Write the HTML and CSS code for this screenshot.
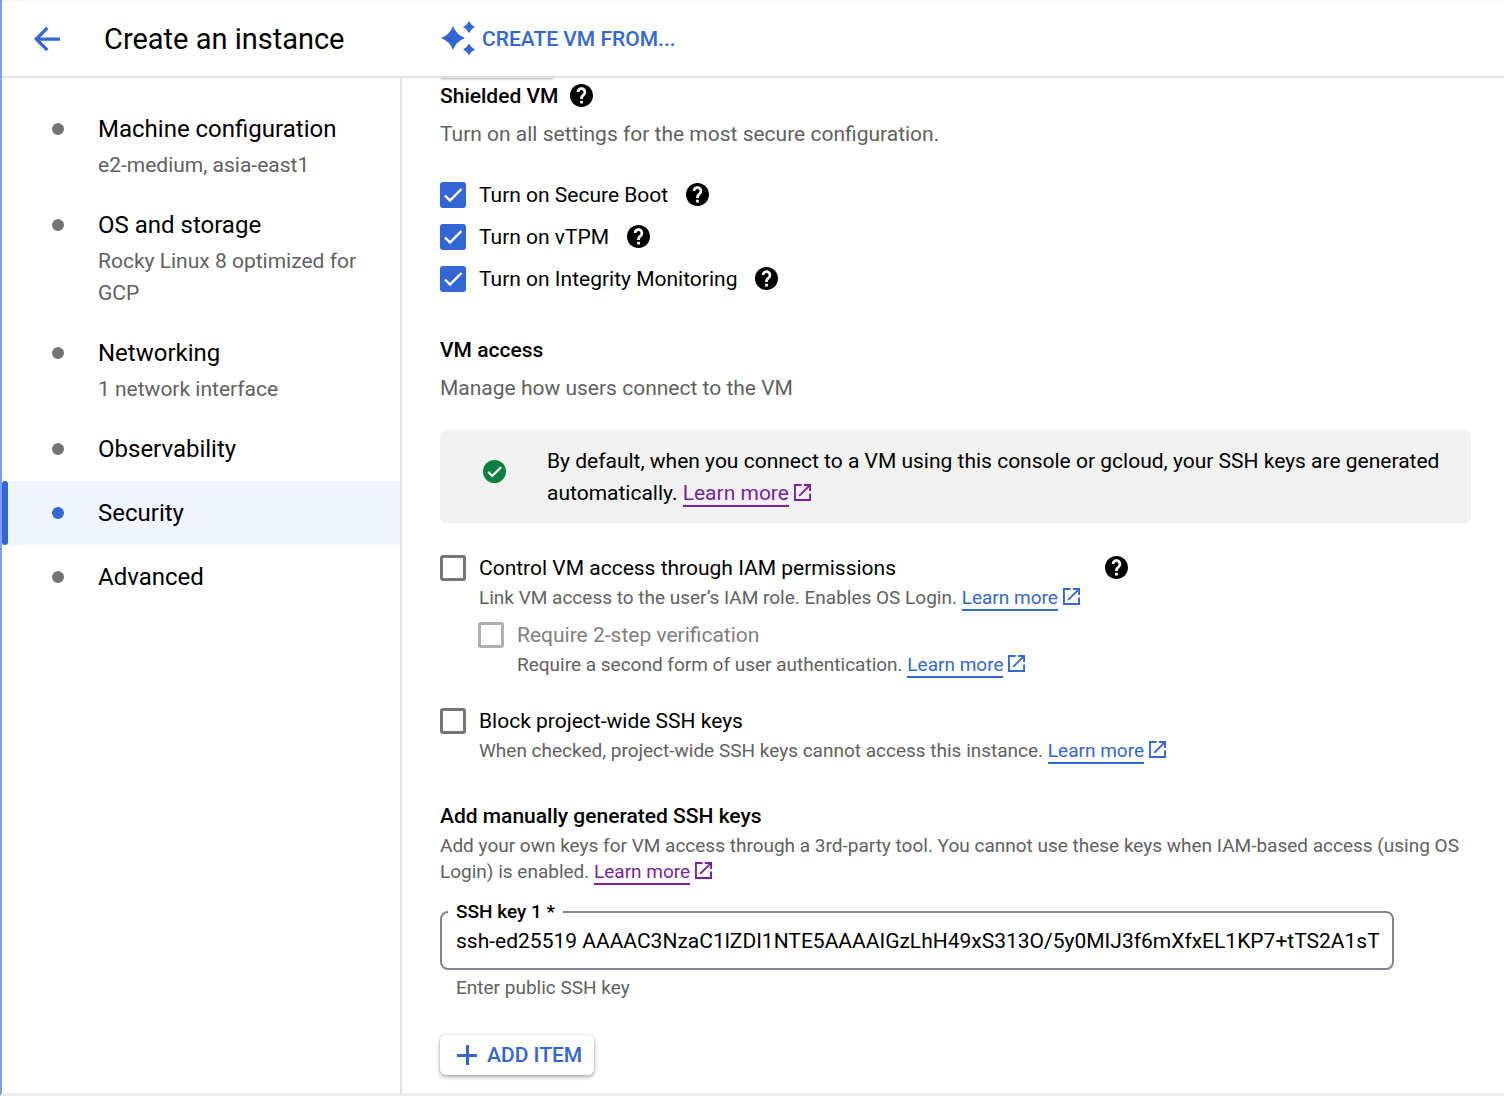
FILE: index.html
```html
<!DOCTYPE html>
<html lang="en">
<head>
<meta charset="utf-8">
<title>Create an instance</title>
<link rel="stylesheet" href="styles.css">
</head>
<body>
<svg class="sprite" aria-hidden="true">
  <symbol id="help" viewBox="2 2 20 20"><path d="M12 2C6.48 2 2 6.48 2 12s4.48 10 10 10 10-4.48 10-10S17.52 2 12 2zm1.2 17h-2.4v-2.4h2.4V19zm2.3-7.8-.9.92C13.7 13 13.2 13.6 13.2 15h-2.4v-.5c0-1.1.45-2.1 1.17-2.83l1.24-1.26c.37-.36.59-.86.59-1.41 0-1-.8-1.8-1.8-1.8s-1.8.8-1.8 1.8H7.9c0-2.3 1.8-4.1 4.1-4.1s4.1 1.8 4.1 4.1c0 .86-.3 1.64-.6 2.2z"/></symbol>
  <symbol id="open" viewBox="3 3 18 18"><path d="M19 19H5V5h6V3H3v18h18v-8h-2v6zM13.500 3v2h4.100l-9.800 9.800 1.400 1.400L19 6.400v4.100h2V3h-7.500z"/></symbol>
</svg>

<header class="topbar">
  <div class="topbar-title">
    <button class="icon-button" type="button" aria-label="Back">
      <svg class="back-icon" viewBox="4 4 16 16"><path d="M20 11H7.830l5.090-5.090L11.500 4.500 4 12l7.500 7.500 1.420-1.410L7.830 13H20v-2z"/></svg>
    </button>
    <h1>Create an instance</h1>
  </div>
  <div class="topbar-actions">
    <button class="text-button" type="button">
      <svg class="spark-icon" viewBox="0 0 36 36"><path d="M13 5q3.500 9 12 12-8.500 3-12 12-3.500-9-12-12 8.500-3 12-12zM29 0q1.800 4.200 6 6-4.200 1.800-6 6-1.800-4.200-6-6 4.200-1.800 6-6zM29 22.500q1.800 4.200 6 6-4.200 1.800-6 6-1.800-4.200-6-6 4.200-1.800 6-6z"/></svg>
      <span>CREATE VM FROM...</span>
    </button>
  </div>
</header>

<div class="layout">
  <nav class="sidebar" aria-label="Instance settings">
    <a class="step" href="#machine"><span class="step-title">Machine configuration</span><span class="step-note">e2-medium, asia-east1</span></a>
    <a class="step" href="#os"><span class="step-title">OS and storage</span><span class="step-note">Rocky Linux 8 optimized for GCP</span></a>
    <a class="step" href="#networking"><span class="step-title">Networking</span><span class="step-note">1 network interface</span></a>
    <a class="step" href="#observability"><span class="step-title">Observability</span></a>
    <a class="step active" href="#security" aria-current="step"><span class="step-title">Security</span></a>
    <a class="step" href="#advanced"><span class="step-title">Advanced</span></a>
  </nav>

  <main class="content">
    <div class="scrolled-edge"></div>

    <section>
      <div class="heading-row">
        <h2>Shielded VM</h2>
        <svg class="help-icon"><use href="#help"/></svg>
      </div>
      <p class="lead">Turn on all settings for the most secure configuration.</p>
      <div class="check-list">
        <div class="check-row"><input type="checkbox" id="secure-boot" checked><label for="secure-boot">Turn on Secure Boot</label><svg class="help-icon"><use href="#help"/></svg></div>
        <div class="check-row"><input type="checkbox" id="vtpm" checked><label for="vtpm">Turn on vTPM</label><svg class="help-icon"><use href="#help"/></svg></div>
        <div class="check-row"><input type="checkbox" id="integrity" checked><label for="integrity">Turn on Integrity Monitoring</label><svg class="help-icon"><use href="#help"/></svg></div>
      </div>
    </section>

    <section class="access">
      <h2>VM access</h2>
      <p class="lead">Manage how users connect to the VM</p>

      <div class="banner">
        <svg class="ok-icon" viewBox="2 2 20 20"><circle cx="12" cy="12" r="10" fill="#0b8043"/><path d="M6.500 12.300l3.600 3.600 7.600-7.600" fill="none" stroke="#fff" stroke-width="2"/></svg>
        <p>By default, when you connect to a VM using this console or gcloud, your SSH keys are generated automatically. <a class="link visited" href="#ssh-docs">Learn more</a><svg class="open-icon visited"><use href="#open"/></svg></p>
      </div>

      <div class="option">
        <input type="checkbox" id="iam">
        <div class="option-body">
          <label for="iam">Control VM access through IAM permissions</label>
          <p class="hint">Link VM access to the user’s IAM role. Enables OS Login. <a class="link" href="#iam-docs">Learn more</a><svg class="open-icon"><use href="#open"/></svg></p>
        </div>
        <svg class="help-icon"><use href="#help"/></svg>
      </div>
      <div class="option nested">
        <input type="checkbox" id="two-step" disabled>
        <div class="option-body">
          <label for="two-step">Require 2-step verification</label>
          <p class="hint">Require a second form of user authentication. <a class="link" href="#two-step-docs">Learn more</a><svg class="open-icon"><use href="#open"/></svg></p>
        </div>
      </div>
      <div class="option">
        <input type="checkbox" id="block-keys">
        <div class="option-body">
          <label for="block-keys">Block project-wide SSH keys</label>
          <p class="hint">When checked, project-wide SSH keys cannot access this instance. <a class="link" href="#block-docs">Learn more</a><svg class="open-icon"><use href="#open"/></svg></p>
        </div>
      </div>
    </section>

    <section class="keys">
      <h2>Add manually generated SSH keys</h2>
      <p class="hint">Add your own keys for VM access through a 3rd-party tool. You cannot use these keys when IAM-based access (using OS Login) is enabled. <a class="link visited" href="#manual-docs">Learn more</a><svg class="open-icon visited"><use href="#open"/></svg></p>
      <fieldset class="field">
        <legend><label for="ssh-key">SSH key 1 *</label></legend>
        <input type="text" id="ssh-key" aria-describedby="ssh-help" value="ssh-ed25519 AAAAC3NzaC1lZDI1NTE5AAAAIGzLhH49xS313O/5y0MIJ3f6mXfxEL1KP7+tTS2A1sTF">
      </fieldset>
      <p class="hint field-help" id="ssh-help">Enter public SSH key</p>
      <button class="add-button" type="button">
        <svg class="plus-icon" viewBox="0 0 20 20"><path d="M9 0h3v9h8v3h-8v8H9v-8H0V9h9z"/></svg>
        <span>ADD ITEM</span>
      </button>
    </section>
  </main>
</div>
</body>
</html>
```
FILE: styles.css
```css
:root {
  --blue: #3367d6;
  --purple: #7b1fa2;
  --muted: #616161;
  --line: #e2e2e2;
}

* {
  box-sizing: border-box;
}

body {
  display: flex;
  flex-direction: column;
  min-height: 100vh;
  margin: 0;
  border-left: 2px solid #7ba1f5;
  border-bottom: 3px solid #eee;
  background: #fff;
  color: #000;
  font: 400 21px/28px Roboto, sans-serif;
}

h1, h2, p {
  margin: 0;
}

h2 {
  font-size: 21px;
  font-weight: 500;
  line-height: 28px;
}

button {
  display: flex;
  align-items: center;
  border: 0;
  background: none;
  color: var(--blue);
  font: 500 21px/28px Roboto, sans-serif;
  cursor: pointer;
}

svg {
  fill: currentColor;
}

.sprite {
  position: absolute;
  width: 0;
  height: 0;
}

/* Top bar */

.topbar {
  position: relative;
  z-index: 1;
  display: grid;
  grid-template-columns: 400px 1fr;
  align-items: center;
  height: 78px;
  border-top: 1px solid #f5f5f5;
  border-bottom: 2px solid var(--line);
  background: #fff;
}

.topbar-title {
  display: flex;
  align-items: center;
  gap: 44px;
  padding-left: 32px;
}

h1 {
  font-size: 29px;
  font-weight: 400;
  line-height: 36px;
}

.icon-button {
  padding: 0;
}

.back-icon {
  width: 26px;
  height: 26px;
}

.topbar-actions {
  padding-left: 38px;
}

.text-button {
  gap: 6px;
  padding: 0;
}

.spark-icon {
  width: 36px;
  height: 36px;
}

/* Side navigation */

.layout {
  display: grid;
  flex: 1;
  grid-template-columns: 400px 1fr;
}

.sidebar {
  padding-top: 19px;
  border-right: 2px solid var(--line);
}

.step {
  position: relative;
  display: flex;
  flex-direction: column;
  gap: 4px;
  padding: 16px 32px 12px 96px;
  color: #000;
  text-decoration: none;
}

.step:not(:has(.step-note)) {
  padding-bottom: 16px;
}

.step::before {
  content: "";
  position: absolute;
  top: 26px;
  left: 50px;
  width: 12px;
  height: 12px;
  border-radius: 50%;
  background: #757575;
}

.step-title {
  font-size: 24px;
  line-height: 32px;
}

.step-note {
  color: var(--muted);
  line-height: 32px;
}

.step.active {
  background: #f0f5ff;
}

.step.active::before {
  background: var(--blue);
}

.step.active::after {
  content: "";
  position: absolute;
  inset: 0 auto 0 0;
  width: 6px;
  border-radius: 3px;
  background: var(--blue);
}

/* Main column */

.content {
  padding: 0 33px 17px 38px;
}

.scrolled-edge {
  width: 114px;
  height: 4px;
  margin-top: -4px;
  margin-bottom: 4px;
  border-radius: 6px;
  box-shadow: 0 1px 3px rgba(0, 0, 0, .3);
}

.heading-row {
  display: flex;
  align-items: center;
  gap: 12px;
}

.help-icon {
  flex: none;
  width: 23px;
  height: 23px;
  margin-bottom: 2px;
}

.lead {
  margin-top: 11px;
  color: var(--muted);
  line-height: 26px;
}

.check-list {
  margin-top: 27px;
}

.check-row {
  display: flex;
  align-items: center;
  height: 42px;
}

.check-row .help-icon {
  margin-left: 18px;
}

input[type="checkbox"] {
  flex: none;
  width: 26px;
  height: 26px;
  margin: 0 13px 0 0;
  border: 3px solid #757575;
  border-radius: 3px;
  background: #fff;
  appearance: none;
}

input[type="checkbox"]:checked {
  border: 0;
  background: var(--blue) url("data:image/svg+xml,%3Csvg xmlns='http://www.w3.org/2000/svg' viewBox='0 0 26 26'%3E%3Cpath d='M5 13.5l5 5L21.500 7' fill='none' stroke='%23fff' stroke-width='2.400'/%3E%3C/svg%3E");
}

input[type="checkbox"]:disabled {
  border-color: #b0b0b0;
}

input[type="checkbox"]:disabled + .option-body label {
  color: #808080;
}

.access {
  margin-top: 36px;
}

.banner {
  display: flex;
  gap: 41px;
  margin-top: 29px;
  margin-bottom: 31px;
  padding: 15px 24px 14px 43px;
  border-radius: 6px;
  background: #f1f1f1;
  line-height: 32px;
}

.ok-icon {
  flex: none;
  width: 23px;
  height: 23px;
  margin-top: 15px;
}

.link {
  border-bottom: 2px solid currentColor;
  color: var(--blue);
  text-decoration: none;
}

.open-icon {
  width: 17px;
  height: 17px;
  margin-left: 5px;
  color: var(--blue);
  vertical-align: -1px;
}

.link.visited,
.open-icon.visited {
  color: var(--purple);
}

.option {
  display: flex;
  align-items: flex-start;
  margin-top: 29px;
}

.option.nested {
  margin-top: 10px;
  padding-left: 38px;
}

.option > input {
  margin-top: 1px;
}

.option .help-icon {
  margin-top: 2px;
  margin-left: 25px;
}

.option-body label {
  display: block;
}

.hint {
  margin-top: 3px;
  color: var(--muted);
  font-size: 19px;
  line-height: 26px;
}

.keys {
  margin-top: 38px;
}

.field {
  min-width: 0;
  margin: 14px 77px 0 0;
  padding: 0 13px 11px 14px;
  border: 2px solid #80868b;
  border-radius: 8px;
}

.field legend {
  margin-left: -8px;
  padding: 0 8px;
  font-size: 19px;
  font-weight: 500;
  line-height: 26px;
}

.field input {
  display: block;
  width: 100%;
  height: 32px;
  padding: 0;
  border: 0;
  outline: 0;
  background: none;
  color: #000;
  font: 400 21px/32px Roboto, sans-serif;
}

.field-help {
  margin-top: 5px;
  padding-left: 16px;
}

.add-button {
  gap: 10px;
  margin-top: 34px;
  padding: 6px 12px 6px 17px;
  border-radius: 6px;
  box-shadow: 0 2px 4px rgba(0, 0, 0, .32), 0 0 3px rgba(0, 0, 0, .12);
}

.plus-icon {
  width: 20px;
  height: 20px;
}
```
